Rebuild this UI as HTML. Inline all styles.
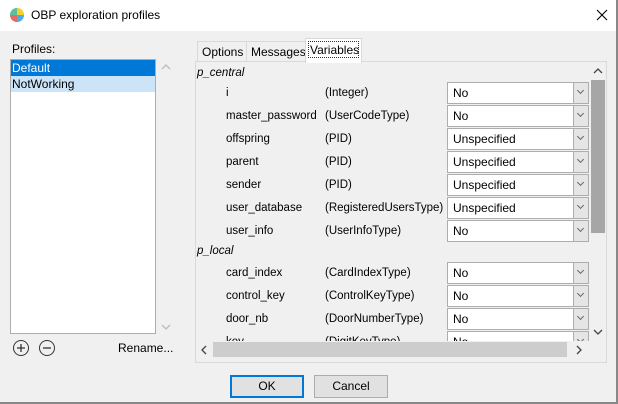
<!DOCTYPE html>
<html><head><style>
*{box-sizing:border-box;margin:0;padding:0}
body{width:618px;height:404px;background:#f0f0f0;font-family:"Liberation Sans",sans-serif;font-size:11.5px;color:#000;position:relative;overflow:hidden}
.abs{position:absolute}
.title{left:0;top:0;width:618px;height:31px;background:#fff}
.row{position:absolute;left:0;width:394px;height:23px}
.lbl{position:absolute;left:30px;top:6px}
.typ{position:absolute;left:129px;top:6px}
.cb{position:absolute;left:251px;top:1px;width:142px;height:22px;border:1px solid #adadad;background:#fff}
.cb span{position:absolute;left:5px;top:3px;font-size:12px}
.cb i{position:absolute;right:0;top:0;width:15px;height:20px;background:#e5e5e5;border-left:1px solid #adadad}
.cb i:after{content:"";position:absolute;left:4px;top:5px;width:4px;height:4px;border-right:1px solid #666;border-bottom:1px solid #666;transform:rotate(45deg)}
.grp{position:absolute;left:1px;font-style:italic}
.btn{position:absolute;top:375px;width:74px;height:23px;background:#e1e1e1;border:1px solid #adadad;text-align:center;line-height:21px;font-size:12px}
</style></head><body>
<div class="abs title"></div>
<svg class="abs" style="left:9px;top:7px" width="16" height="16" viewBox="0 0 16 16"><circle cx="8" cy="8" r="7" fill="#e94"/><path d="M8 8V1A7 7 0 0 1 15 8Z" fill="#f4d12a"/><path d="M8 8H15A7 7 0 0 1 8 15Z" fill="#4ab0e0"/><path d="M8 8V15A7 7 0 0 1 1 8Z" fill="#e56a6a"/><path d="M8 8H1A7 7 0 0 1 8 1Z" fill="#5cc0a0"/></svg>
<div class="abs" style="left:31px;top:8px;font-size:12px">OBP exploration profiles</div>
<svg class="abs" style="left:596px;top:9px" width="12" height="12"><path d="M1 1L11 11M11 1L1 11" stroke="#000" stroke-width="1.1"/></svg>
<div class="abs" style="left:616px;top:0;width:2px;height:404px;background:#888"></div>
<div class="abs" style="left:0;top:402px;width:618px;height:2px;background:#888"></div>

<div class="abs" style="left:12px;top:42px;font-size:12px">Profiles:</div>
<div class="abs" style="left:10px;top:59px;width:146px;height:275px;background:#fff;border:1px solid #adadad"></div>
<div class="abs" style="left:11px;top:60px;width:144px;height:16px;background:#0078d7;color:#fff;padding-left:1px;line-height:16px;font-size:12px">Default</div>
<div class="abs" style="left:11px;top:76px;width:144px;height:16px;background:#cce4f7;padding-left:1px;line-height:16px;font-size:12px">NotWorking</div>
<svg class="abs" style="left:161px;top:63px" width="10" height="8"><path d="M1 6L5 2L9 6" fill="none" stroke="#bbb" stroke-width="1.3"/></svg>
<svg class="abs" style="left:161px;top:323px" width="10" height="8"><path d="M1 2L5 6L9 2" fill="none" stroke="#bbb" stroke-width="1.3"/></svg>
<svg class="abs" style="left:12px;top:339px" width="50" height="18"><circle cx="9" cy="9" r="7.5" fill="none" stroke="#333"/><path d="M5 9h8M9 5v8" stroke="#333" stroke-width="1.3"/><circle cx="35" cy="9" r="7.5" fill="none" stroke="#333"/><path d="M31 9h8" stroke="#333" stroke-width="1.3"/></svg>
<div class="abs" style="left:118px;top:341px;font-size:12px">Rename...</div>

<div class="abs" style="left:195px;top:61px;width:412px;height:302px;border:1px solid #d9d9d9;background:#f0f0f0"></div>
<div class="abs" style="left:197px;top:41px;width:50px;height:21px;border:1px solid #d9d9d9;border-bottom:none;padding:3px 0 0 4px;font-size:12px">Options</div>
<div class="abs" style="left:246px;top:41px;width:60px;height:21px;border:1px solid #d9d9d9;border-bottom:none;padding:3px 0 0 4px;font-size:12px">Messages</div>
<div class="abs" style="left:305px;top:38px;width:57px;height:25px;border:1px solid #d9d9d9;border-bottom:none;background:#fff;padding:2px 2px 0 2px;font-size:12px"><div style="border:1px dotted #333;padding:1px 1px;height:17px">Variables</div></div>

<div class="abs" style="left:196px;top:62px;width:394px;height:279px;overflow:hidden">
<div class="grp" style="top:5px">p_central</div>
<div class="row" style="top:19px"><div class="lbl">i</div><div class="typ">(Integer)</div><div class="cb"><span>No</span><i></i></div></div>
<div class="row" style="top:42px"><div class="lbl">master_password</div><div class="typ">(UserCodeType)</div><div class="cb"><span>No</span><i></i></div></div>
<div class="row" style="top:65px"><div class="lbl">offspring</div><div class="typ">(PID)</div><div class="cb"><span>Unspecified</span><i></i></div></div>
<div class="row" style="top:88px"><div class="lbl">parent</div><div class="typ">(PID)</div><div class="cb"><span>Unspecified</span><i></i></div></div>
<div class="row" style="top:111px"><div class="lbl">sender</div><div class="typ">(PID)</div><div class="cb"><span>Unspecified</span><i></i></div></div>
<div class="row" style="top:134px"><div class="lbl">user_database</div><div class="typ">(RegisteredUsersType)</div><div class="cb"><span>Unspecified</span><i></i></div></div>
<div class="row" style="top:157px"><div class="lbl">user_info</div><div class="typ">(UserInfoType)</div><div class="cb"><span>No</span><i></i></div></div>
<div class="grp" style="top:183px">p_local</div>
<div class="row" style="top:199px"><div class="lbl">card_index</div><div class="typ">(CardIndexType)</div><div class="cb"><span>No</span><i></i></div></div>
<div class="row" style="top:222px"><div class="lbl">control_key</div><div class="typ">(ControlKeyType)</div><div class="cb"><span>No</span><i></i></div></div>
<div class="row" style="top:245px"><div class="lbl">door_nb</div><div class="typ">(DoorNumberType)</div><div class="cb"><span>No</span><i></i></div></div>
<div class="row" style="top:268px"><div class="lbl">key</div><div class="typ">(DigitKeyType)</div><div class="cb"><span>No</span><i></i></div></div>
</div>
<div class="abs" style="left:590px;top:62px;width:16px;height:279px;background:#f0f0f0"></div>
<div class="abs" style="left:591px;top:80px;width:14px;height:153px;background:#a6a6a6"></div>
<svg class="abs" style="left:593px;top:67px" width="10" height="8"><path d="M1 6L5 2L9 6" fill="none" stroke="#444" stroke-width="1.3"/></svg>
<svg class="abs" style="left:593px;top:328px" width="10" height="8"><path d="M1 2L5 6L9 2" fill="none" stroke="#444" stroke-width="1.3"/></svg>
<div class="abs" style="left:196px;top:341px;width:394px;height:18px;background:#f0f0f0"></div>
<div class="abs" style="left:213px;top:342px;width:354px;height:15px;background:#cdcdcd"></div>
<svg class="abs" style="left:200px;top:345px" width="8" height="10"><path d="M6 1L2 5L6 9" fill="none" stroke="#444" stroke-width="1.3"/></svg>
<svg class="abs" style="left:575px;top:345px" width="8" height="10"><path d="M2 1L6 5L2 9" fill="none" stroke="#444" stroke-width="1.3"/></svg>

<div class="btn" style="left:230px;border:2px solid #0078d7;line-height:19px">OK</div>
<div class="btn" style="left:314px">Cancel</div>
</body></html>
